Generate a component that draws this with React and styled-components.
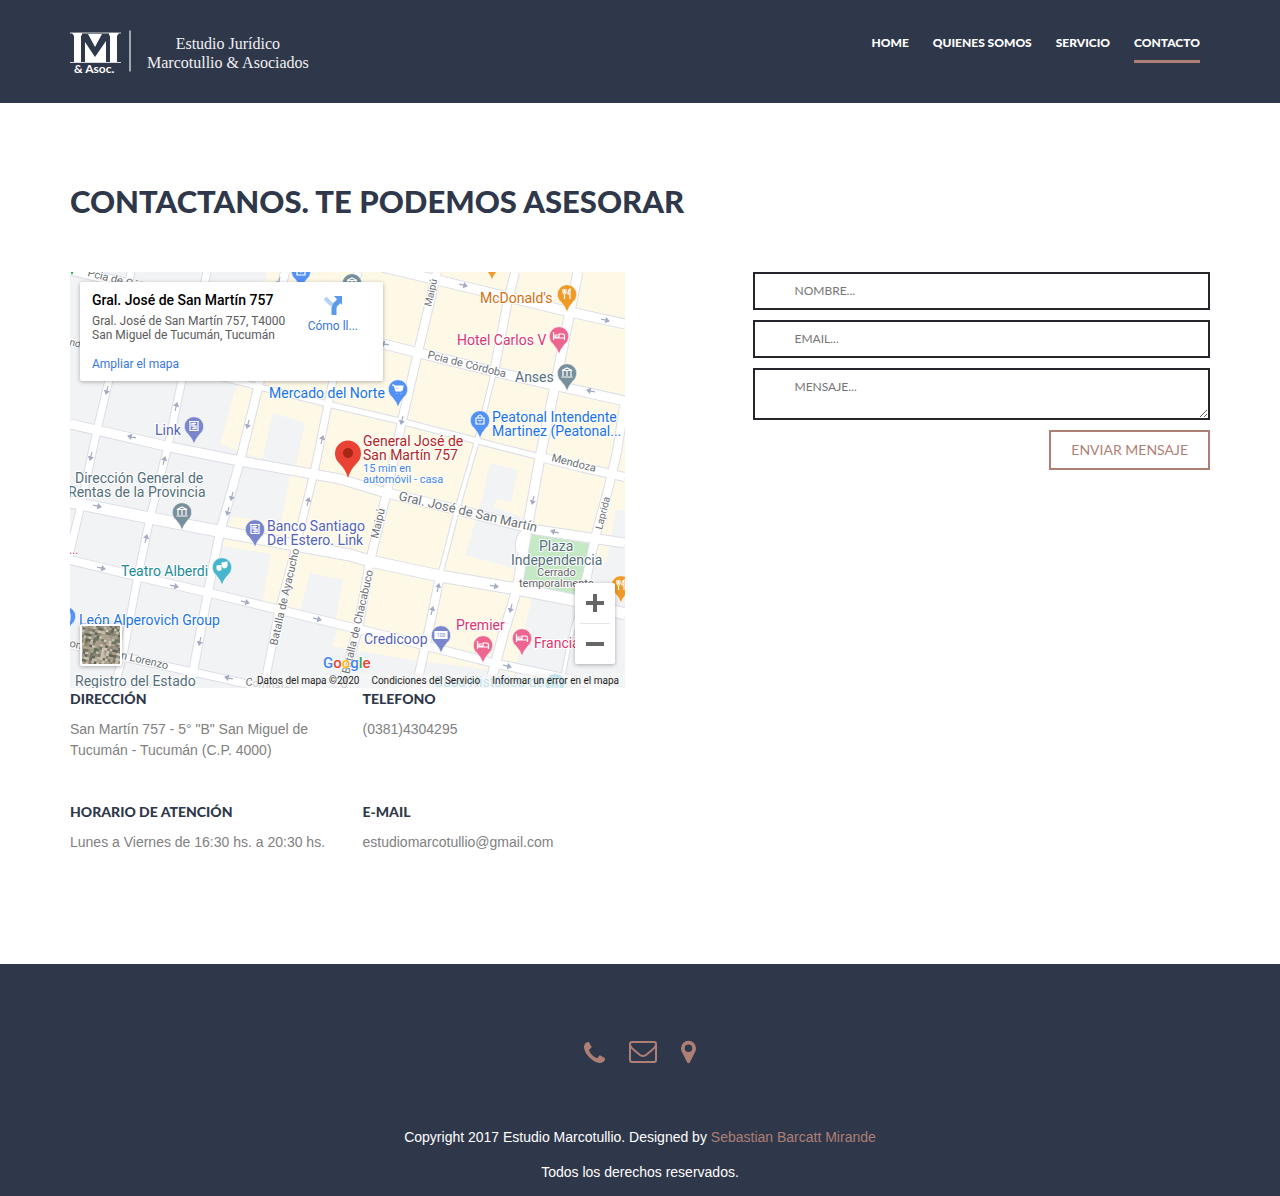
import React from "react";
import styled, { createGlobalStyle } from "styled-components";

const navy = "#2f374a";
const clay = "#ae7f75";
const display = `Lato, "Open Sans", sans-serif`;

const GlobalStyle = createGlobalStyle`
  *, *::before, *::after { box-sizing: border-box; }
  body {
    margin: 0;
    background: #fff;
    color: #818181;
    font: 14px/21px "Liberation Sans", Arial, sans-serif;
  }
  a { color: inherit; text-decoration: none; }
`;

const Container = styled.div`
  width: min(1140px, 100% - 40px);
  margin: 0 auto;
`;

/* Header */
const Header = styled.header`
  background: ${navy};
  color: #fff;
`;
const HeaderBar = styled(Container)`
  display: flex;
  justify-content: space-between;
  align-items: flex-start;
  min-height: 103px;
  padding-top: 28px;
`;
const Brand = styled.a`
  display: flex;
  align-items: center;
  gap: 15px;
`;
const BrandName = styled.span`
  padding-top: 2px;
  font: 16px/19px "Liberation Serif", "Times New Roman", serif;
  color: #f1f1f3;
  text-align: center;
`;
const Nav = styled.nav`
  display: flex;
  gap: 24px;
  padding: 4px 10px 0 0;
`;
const NavLink = styled.a`
  padding-bottom: 7px;
  border-bottom: 3px solid ${(p) => (p.$active ? clay : "transparent")};
  font: 900 12px/21px ${display};
`;

/* Main */
const Main = styled(Container).attrs({ as: "main" })`
  padding: 79px 0 111px;
`;
const Title = styled.h1`
  margin: 0 0 52px;
  color: ${navy};
  font: 900 31px/38px ${display};
`;
const Columns = styled.div`
  display: grid;
  grid-template-columns: repeat(12, 1fr);
  column-gap: 30px;
  align-items: start;
`;
const LeftColumn = styled.div`
  grid-column: 1 / span 6;
`;
const Form = styled.form`
  grid-column: 8 / span 5;
  display: grid;
  gap: 10px;
`;
const Field = styled.input`
  width: 100%;
  height: 38px;
  padding: 0 40px 2px;
  border: 2px solid #25262c;
  border-radius: 0;
  background: #fff;
  color: ${navy};
  font: 12px/18px ${display};
  &::placeholder { color: #757575; opacity: 1; }
`;
const MessageField = styled(Field).attrs({ as: "textarea" })`
  display: block;
  height: 52px;
  padding: 8px 40px;
  resize: vertical;
`;
const SubmitButton = styled.button`
  justify-self: end;
  height: 40px;
  padding: 0 20px;
  border: 2px solid ${clay};
  background: #fff;
  color: ${clay};
  font: 14px/20px ${display};
`;

const InfoGrid = styled.div`
  display: grid;
  grid-template-columns: 1fr 1fr;
  gap: 40px 30px;
`;
const InfoTitle = styled.h2`
  margin: 0 0 9px;
  color: ${navy};
  font: 900 14px/22px ${display};
`;
const InfoText = styled.p`
  margin: 0;
`;

/* Map */
const MapFrame = styled.section`
  position: relative;
  height: 416px;
  overflow: hidden;
  background: #f1f3f4;
  font-family: Roboto, sans-serif;
`;
const MapDrawing = styled.svg`
  display: block;
  width: 100%;
  height: 100%;
`;
const Label = styled.text`
  fill: ${(p) => p.$color || "#5f6368"};
  font-family: Roboto, sans-serif;
  font-size: ${(p) => p.$size || 14}px;
  paint-order: stroke;
  stroke: #fff;
  stroke-width: 2px;
  stroke-linejoin: round;
`;
const PlaceCard = styled.div`
  position: absolute;
  top: 10px;
  left: 10px;
  display: flex;
  justify-content: space-between;
  width: 303px;
  height: 99px;
  padding: 9px 25px 0 12px;
  border-radius: 2px;
  background: #fff;
  box-shadow: 0 1px 4px rgba(0, 0, 0, 0.3);
  font-size: 12px;
  line-height: 14px;
`;
const PlaceName = styled.div`
  margin-bottom: 5px;
  color: #000;
  font-size: 14px;
  font-weight: 500;
  line-height: 18px;
`;
const PlaceAddress = styled.div`
  margin-bottom: 15px;
  color: #5b5b5b;
`;
const MapLink = styled.a`
  color: #3a76e0;
`;
const Directions = styled(MapLink)`
  display: flex;
  flex-direction: column;
  align-items: center;
  gap: 4px;
  padding-top: 3px;
`;
const ZoomControls = styled.div`
  position: absolute;
  right: 10px;
  bottom: 24px;
  width: 40px;
  padding: 0 5px;
  border-radius: 2px;
  background: #fff;
  box-shadow: 0 1px 4px rgba(0, 0, 0, 0.3);
`;
const ZoomButton = styled.button`
  display: grid;
  place-items: center;
  width: 30px;
  height: 40px;
  padding: 0;
  border: 0;
  background: none;
  & + & { border-top: 1px solid #e6e6e6; height: 41px; }
`;
const SatelliteButton = styled.button`
  position: absolute;
  left: 10px;
  bottom: 22px;
  width: 42px;
  height: 42px;
  padding: 0;
  border: 2px solid #fff;
  border-radius: 2px;
  overflow: hidden;
  background: #8f8a78;
  box-shadow: 0 1px 4px rgba(0, 0, 0, 0.3);
`;
const MapCredits = styled.div`
  position: absolute;
  right: 0;
  bottom: 0;
  display: flex;
  gap: 12px;
  padding: 0 6px 0 5px;
  background: rgba(245, 245, 245, 0.7);
  color: #222;
  font-size: 10px;
  line-height: 14px;
  white-space: nowrap;
`;
const GoogleMark = styled.a`
  position: absolute;
  left: 253px;
  bottom: 15px;
  font: 500 15px/20px Roboto, sans-serif;
  text-shadow: 0 0 2px #fff, 0 0 2px #fff;
`;
const Letter = styled.span`
  color: ${(p) => p.$color};
`;

/* Footer */
const Footer = styled.footer`
  padding: 74px 20px 13px;
  background: ${navy};
  color: #fff;
  text-align: center;
`;
const ContactIcons = styled.div`
  display: flex;
  justify-content: center;
  align-items: center;
  gap: 24px;
  height: 28px;
  margin-bottom: 61px;
  color: ${clay};
`;
const IconLink = styled.a`
  display: flex;
`;
const FooterLine = styled.p`
  margin: 0 0 14px;
  &:last-child { margin: 0; }
`;
const CreditLink = styled.a`
  color: ${clay};
`;

const roads = [
  [[[340, 257], [437, 280], [570, 312], [625, 324]], 9],
  [[[70, 270], [383, 344], [500, 373], [625, 401]], 9],
  [[[70, 343], [215, 376], [340, 407], [400, 421]], 5],
  [[[400, 421], [470, 439], [540, 457]], 5],
  [[[540, 457], [580, 467], [625, 477]], 8],
  [[[70, 424], [170, 447], [240, 461], [340, 479], [383, 492], [450, 508], [537, 530], [625, 543]], 9],
  [[[70, 502], [150, 518], [223, 532], [350, 555], [370, 561], [440, 576], [517, 589], [573, 600], [625, 614]], 11],
  [[[70, 560], [140, 577], [210, 593], [280, 610], [350, 627], [423, 645], [493, 663], [573, 680], [625, 692]], 8],
  [[[70, 645], [123, 657], [193, 672], [247, 684], [300, 696]], 7],
  [[[131, 272], [109, 380], [97, 430], [81, 505], [68, 560]], 7],
  [[[207, 272], [182, 380], [168, 446], [150, 518], [138, 576], [123, 655], [113, 692]], 7],
  [[[285, 272], [260, 380], [240, 461], [220, 532], [208, 592], [193, 672], [188, 692]], 8],
  [[[358, 272], [333, 380], [314, 473], [294, 554], [278, 615], [263, 692]], 7],
  [[[437, 272], [418, 352], [402, 421], [387, 492], [370, 561], [358, 629], [340, 692]], 8],
  [[[515, 272], [507, 305], [494, 372]], 8],
  [[[494, 372], [477, 441], [457, 510], [440, 576]], 4],
  [[[440, 576], [430, 625], [415, 692]], 8],
  [[[578, 272], [555, 386], [540, 457], [527, 530], [517, 589], [503, 635], [488, 692]], 9],
  [[[625, 400], [617, 452], [608, 490], [595, 538], [585, 585]], 8],
  [[[585, 585], [570, 640], [560, 692]], 3],
];

const blocks = [
  ["#fef8e7", "235,390 243,375 275,240 640,240 640,700 505,690 508,672 417,661 332,646 338,629 290,612 262,604 271,554 222,546 232,516 281,524 291,470 220,444"],
  ["#f1f3f4", "273,413 305,423 295,468 262,460"],
  ["#f1f3f4", "310,573 343,580 335,622 300,612"],
  ["#f1f3f4", "490,463 518,470 511,502 497,499 493,507 530,520 517,569 465,555 482,500"],
  ["#f1f3f4", "532,598 640,622 640,700 508,700"],
  ["#f1f3f4", "616,510 640,510 640,612 588,600 590,560 606,563"],
  ["#c5e8c5", "532,534 591,544 575,600 521,588"],
];

const arrows = [
  [463, 285, 13], [605, 320, 13], [591, 391, 193], [107, 390, 104], [176, 407, -76], [248, 424, 104],
  [132, 437, 193], [91, 456, 104], [322, 440, -76], [402, 420, 104], [164, 461, -76], [97, 506, 13],
  [232, 496, 104], [228, 511, 104], [308, 502, -76], [146, 539, -76], [101, 568, 13], [174, 586, 13],
  [245, 602, 13], [317, 619, 13], [200, 641, 104], [229, 678, 193], [533, 500, 104], [555, 532, 193],
  [494, 586, 10], [438, 588, -76], [432, 611, -76], [511, 608, 104], [507, 666, 13], [385, 344, 193], [279, 281, 104],
];

const glyphs = {
  fork: <path d="M-4-5v3.500q0 1.500 1.500 1.500V5M-1-5v3.500Q-1 0-2.500 0M-2.500-5v4M3 5V-5Q1-4 1-1v1h2" />,
  bed: <path d="M-5.500-4V4M-5.500 2H5.500V4M5.500 2V0q0-2-2-2H0v3h-4v-2h3" />,
  bank: <path d="M-5-2.500 0-5l5 2.500zM-4-2V3M0-2v5M4-2v5M-5.500 4h11" />,
  cart: <path d="M-6-4h2l2 6h5.500M-3.500-3H5L4 1-2 0zM-1 4.200v.5M3 4.200v.5" fill="#fff" />,
  bag: <path d="M-4-2h8v6h-8zM-2-2v-1.500q2-3 4 0V-2M-1.500 0q1.500 2 3 0" />,
  cash: <path d="M-5-4.500H5M-4-4.500v9h8v-9M2-2.500h-4V0h4v2.500h-4M0-3.500v7" />,
  masks: <path d="M-5-1l4-.5v4q-3 2-4-1zM0-4l5-1v4Q4 1 2 1L1 0z" fill="#fff" />,
  card: <path d="M-6-3.500H6v7H-6z" fill="#fff" />,
};

const pins = [
  [567, 294, "#f29a27", "fork"], [559, 336, "#ee6590", "bed"], [567, 373, "#78909c", "bank"],
  [480, 420, "#5491f5", "bag"], [398, 389, "#5491f5", "cart"], [194, 426, "#7986cb", "cash"],
  [182, 512, "#78909c", "bank"], [255, 529, "#7986cb", "cash"], [222, 567, "#46b5ce", "masks"],
  [441, 635, "#7986cb", "card"], [483, 645, "#ee6590", "bed"], [522, 638, "#ee6590", "bed"],
  [621, 585, "#f29a27", "fork"], [66, 616, "#5491f5", "bag"], [301, 271, "#5491f5", "bag"],
  [352, 283, "#78909c", "bank"], [492, 262, "#f29a27", "fork"], [72, 258, "#34a853", "bag"], [555, 683, "#46b5ce", "bank"],
];

const blue = "#1a73e8";
const indigo = "#5463b8";
const slate = "#546e7a";
const pink = "#e0356f";
const labels = [
  [480, 303, "McDonald's", "#d56e0c"], [457, 345, "Hotel Carlos V", pink], [515, 382, "Anses", slate],
  [492, 422, "Peatonal Intendente", blue], [492, 436, "Martinez (Peatonal...", blue],
  [269, 398, "Mercado del Norte", blue], [155, 435, "Link", indigo],
  [363, 446, "General José de", "#b3261e"], [363, 460, "San Martín 757", "#b3261e"],
  [363, 472, "15 min en", "#4285e8", 11], [363, 483, "automóvil - casa", "#4285e8", 11],
  [75, 483, "Dirección General de", slate], [68, 497, "Rentas de la Provincia", slate],
  [267, 531, "Banco Santiago", indigo], [267, 545, "Del Estero. Link", indigo],
  [121, 576, "Teatro Alberdi", "#1b8b96"], [79, 625, "León Alperovich Group", blue],
  [75, 686, "Registro del Estado", slate], [364, 644, "Credicoop", indigo],
  [456, 630, "Premier", pink], [534, 648, "Francia", pink], [539, 551, "Plaza", slate],
  [511, 565, "Independencia", slate], [537, 576, "Cerrado", "#5f6368", 11],
  [519, 587, "temporalmente", "#5f6368", 11], [434, 687, "Casa Histórica de", "#46b5ce"], [69, 554, "...", pink, 12],
];
const streets = [
  [87, 276, 14, "Pcia de Córdoba", 11], [427, 358, 14, "Pcia de Córdoba", 11], [551, 461, 14, "Mendoza", 11],
  [398, 500, 13, "Gral. José de San Martín", 13], [431, 307, -77, "Maipú", 10], [378, 539, -77, "Maipú", 11],
  [602, 530, -76, "Laprida", 10], [277, 646, -77, "Batalla de Ayacucho", 11], [346, 689, -77, "de Batalla de Chacabuco", 11],
  [62, 645, 13, "Combate San Lorenzo", 11], [245, 685, 10, "Combate", 11], [69, 345, 14, "ndoza", 10],
];

function Pin({ x, y, color, glyph }) {
  return (
    <g transform={`translate(${x} ${y})`}>
      <path d="M0 18Q-1.500 13-6 8A9.700 9.700 0 1 1 6 8Q1.500 13 0 18z" fill={color} stroke="#fff" strokeWidth="0.6" />
      <g fill="none" stroke="#fff" strokeWidth="1.200">{glyphs[glyph]}</g>
      {glyph === "card" && <text x="-4" y="2" fontSize="5" fill={color}>100</text>}
    </g>
  );
}

function StreetMap() {
  const line = (pts) => pts.map((p) => p.join(",")).join(" ");
  return (
    <MapDrawing viewBox="70 272 555 416" preserveAspectRatio="xMidYMid slice" role="img" aria-label="Mapa">
      <rect x="0" y="200" width="720" height="560" fill="#f1f3f4" />
      {blocks.map(([fill, points]) => <polygon key={points} points={points} fill={fill} />)}
      <path d="M527 532q-10 5-7 20" fill="none" stroke="#dadce4" strokeWidth="9" />
      {roads.map(([pts, w], i) => (
        <polyline key={i} points={line(pts)} fill="none" stroke="#dcdee6" strokeWidth={w + 2} strokeLinejoin="round" />
      ))}
      <path d="M527 532q-10 5-7 20" fill="none" stroke="#fff" strokeWidth="7" />
      {roads.map(([pts, w], i) => (
        <polyline key={i} points={line(pts)} fill="none" stroke="#fff" strokeWidth={w} strokeLinejoin="round" />
      ))}
      {arrows.map(([x, y, a]) => (
        <path key={`${x}-${y}`} transform={`translate(${x} ${y}) rotate(${a})`} d="M-4 0H3M1-2 4 0 1 2z" fill="#a5abc3" stroke="#a5abc3" strokeWidth="1.200" />
      ))}
      {streets.map(([x, y, a, text, size]) => (
        <Label key={`${text}${x}`} $size={size} $color="#6b7075" transform={`translate(${x} ${y}) rotate(${a})`}>{text}</Label>
      ))}
      {pins.map(([x, y, color, glyph]) => <Pin key={`${x}-${y}`} x={x} y={y} color={color} glyph={glyph} />)}
      {labels.map(([x, y, text, color, size]) => (
        <Label key={`${text}${y}`} x={x} y={y} $color={color} $size={size}>{text}</Label>
      ))}
      <path d="M348 478Q346 470 339 463A13 13 0 1 1 357 463Q350 470 348 478z" fill="#ea4335" />
      <circle cx="348" cy="453" r="5" fill="#a52714" />
    </MapDrawing>
  );
}

function SatelliteTile() {
  const shades = ["#a9a28d", "#c4bda9", "#6d7360", "#8b8071", "#cfc8b8", "#5f6656", "#9b9488", "#b3a28f"];
  const cells = [];
  let seed = 17;
  for (let i = 0; i < 361; i += 1) {
    seed = (seed * 1103 + 12345) % 65521;
    cells.push(
      <rect key={i} x={(i % 19) * 2} y={Math.floor(i / 19) * 2} width="3" height="2" fill={shades[seed % 8]} />
    );
  }
  return <svg width="38" height="38" viewBox="0 0 38 38" display="block"><g transform="rotate(12 19 19) scale(1.300) translate(-4 -4)">{cells}</g></svg>;
}

function Logo() {
  return (
    <svg width="62" height="48" viewBox="0 0 62 48" role="img" aria-label="M & Asoc.">
      <g fill="#fff">
        <path d="M0 4.500h51v1H0zM0 34h51v1H0z" opacity="0.8" />
        <path d="M2 5h10v2l-1 1v26H4V8zM49 5H39v2l1 1v26h7V8z" />
        <path d="M18 6h14l-7 13z" />
        <path d="M15 34V14l10 15 11-16v21z" />
      </g>
      <path d="M60 2.500v41" stroke="#c8cbd2" strokeWidth="1.500" />
      <text x="4" y="45" fontFamily="Lato, sans-serif" fontSize="12" fontWeight="700" fill="#fff">&amp; Asoc.</text>
    </svg>
  );
}

export default function App() {
  return (
    <>
      <GlobalStyle />
      <Header>
        <HeaderBar>
          <Brand href="#home">
            <Logo />
            <BrandName>Estudio Jurídico<br />Marcotullio &amp; Asociados</BrandName>
          </Brand>
          <Nav>
            <NavLink href="#home">HOME</NavLink>
            <NavLink href="#quienes">QUIENES SOMOS</NavLink>
            <NavLink href="#servicio">SERVICIO</NavLink>
            <NavLink href="#contacto" $active aria-current="page">CONTACTO</NavLink>
          </Nav>
        </HeaderBar>
      </Header>

      <Main>
        <Title>CONTACTANOS. TE PODEMOS ASESORAR</Title>
        <Columns>
          <LeftColumn>
            <MapFrame aria-label="Ubicación">
              <StreetMap />
              <PlaceCard>
                <div>
                  <PlaceName>Gral. José de San Martín 757</PlaceName>
                  <PlaceAddress>Gral. José de San Martín 757, T4000<br />San Miguel de Tucumán, Tucumán</PlaceAddress>
                  <MapLink href="#mapa">Ampliar el mapa</MapLink>
                </div>
                <Directions href="#ruta">
                  <svg width="22" height="21" viewBox="0 0 22 21" aria-hidden="true">
                    <path d="M3 4l7 7" fill="none" stroke="#b4d2f7" strokeWidth="4" />
                    <path d="M12 21v-6q0-4 3-6l2-2" fill="none" stroke="#5b9ae8" strokeWidth="5" />
                    <path d="M12 2h8v9z" fill="#5b9ae8" />
                  </svg>
                  Cómo ll...
                </Directions>
              </PlaceCard>
              <SatelliteButton aria-label="Satélite"><SatelliteTile /></SatelliteButton>
              <GoogleMark href="#google" aria-label="Google">
                <Letter $color="#4285f4">G</Letter><Letter $color="#ea4335">o</Letter><Letter $color="#fbbc05">o</Letter><Letter $color="#4285f4">g</Letter><Letter $color="#34a853">l</Letter><Letter $color="#ea4335">e</Letter>
              </GoogleMark>
              <ZoomControls>
                <ZoomButton aria-label="Acercar">
                  <svg width="18" height="18" viewBox="0 0 18 18"><path d="M7 0h4v7h7v4h-7v7H7v-7H0V7h7z" fill="#666" /></svg>
                </ZoomButton>
                <ZoomButton aria-label="Alejar">
                  <svg width="18" height="18" viewBox="0 0 18 18"><path d="M0 7h18v4H0z" fill="#666" /></svg>
                </ZoomButton>
              </ZoomControls>
              <MapCredits>
                <span>Datos del mapa ©2020</span>
                <a href="#condiciones">Condiciones del Servicio</a>
                <a href="#error">Informar un error en el mapa</a>
              </MapCredits>
            </MapFrame>
            <InfoGrid>
              <div>
                <InfoTitle>DIRECCIÓN</InfoTitle>
                <InfoText>San Martín 757 - 5° "B" San Miguel de Tucumán - Tucumán (C.P. 4000)</InfoText>
              </div>
              <div>
                <InfoTitle>TELEFONO</InfoTitle>
                <InfoText>(0381)4304295</InfoText>
              </div>
              <div>
                <InfoTitle>HORARIO DE ATENCIÓN</InfoTitle>
                <InfoText>Lunes a Viernes de 16:30 hs. a 20:30 hs.</InfoText>
              </div>
              <div>
                <InfoTitle>E-MAIL</InfoTitle>
                <InfoText>estudiomarcotullio@gmail.com</InfoText>
              </div>
            </InfoGrid>
          </LeftColumn>
          <Form onSubmit={(e) => e.preventDefault()}>
            <Field type="text" name="nombre" aria-label="Nombre" placeholder="NOMBRE..." />
            <Field type="email" name="email" aria-label="Email" placeholder="EMAIL..." />
            <MessageField name="mensaje" aria-label="Mensaje" placeholder="MENSAJE..." />
            <SubmitButton type="submit">ENVIAR MENSAJE</SubmitButton>
          </Form>
        </Columns>
      </Main>

      <Footer>
        <ContactIcons>
          <IconLink href="#telefono" aria-label="Teléfono">
            <svg width="21" height="21" viewBox="0 0 1408 1408" fill="currentColor"><path d="M1408 1112q0 27-10 70.500t-21 68.500q-21 50-122 106-94 51-186 51-27 0-52.500-3.500t-57.500-12.500-47.500-14.500-55.500-20.500-49-18q-98-35-175-83-128-79-264.500-215.500T152 776q-48-77-83-175-3-9-18-49t-20.500-55.500T16 449 3.500 391.500 0 339q0-92 51-186Q107 52 157 31q25-11 68.500-21T296 0q14 0 21 3 18 6 53 76 11 19 30 54t35 63.500 31 53.500q3 4 17.500 25t21.500 35.500 7 28.500q0 20-28.500 50t-62 55-62 53-28.500 46q0 9 5 22.500t8.500 20.500 14 24 11.500 19q76 137 174 235t235 174q2 1 19 11.500t24 14 20.500 8.500 22.500 5q18 0 46-28.500t53-62 55-62 50-28.500q14 0 28.500 7t35.500 21.500 25 17.500q25 15 53.500 31t63.500 35 54 30q70 35 76 53 3 7 3 21z" /></svg>
          </IconLink>
          <IconLink href="#email" aria-label="E-mail">
            <svg width="28" height="22" viewBox="0 0 28 22" fill="none" stroke="currentColor" strokeWidth="2"><rect x="1" y="1" width="26" height="20" rx="2" /><path d="M1 4q1 3 4 5l6 5q3 2 6 0l6-5q3-2 4-5" /></svg>
          </IconLink>
          <IconLink href="#mapa" aria-label="Mapa">
            <svg width="15" height="24" viewBox="0 0 16 24" fill="currentColor"><path fillRule="evenodd" d="M8 0a8 8 0 0 1 8 8q0 2-1 4L9.500 23q-1.500 2-3 0L1 12Q0 10 0 8a8 8 0 0 1 8-8zm0 4a4 4 0 1 0 0 8 4 4 0 0 0 0-8z" /></svg>
          </IconLink>
        </ContactIcons>
        <FooterLine>Copyright 2017 Estudio Marcotullio. Designed by <CreditLink href="#autor">Sebastian Barcatt Mirande</CreditLink></FooterLine>
        <FooterLine>Todos los derechos reservados.</FooterLine>
      </Footer>
    </>
  );
}
